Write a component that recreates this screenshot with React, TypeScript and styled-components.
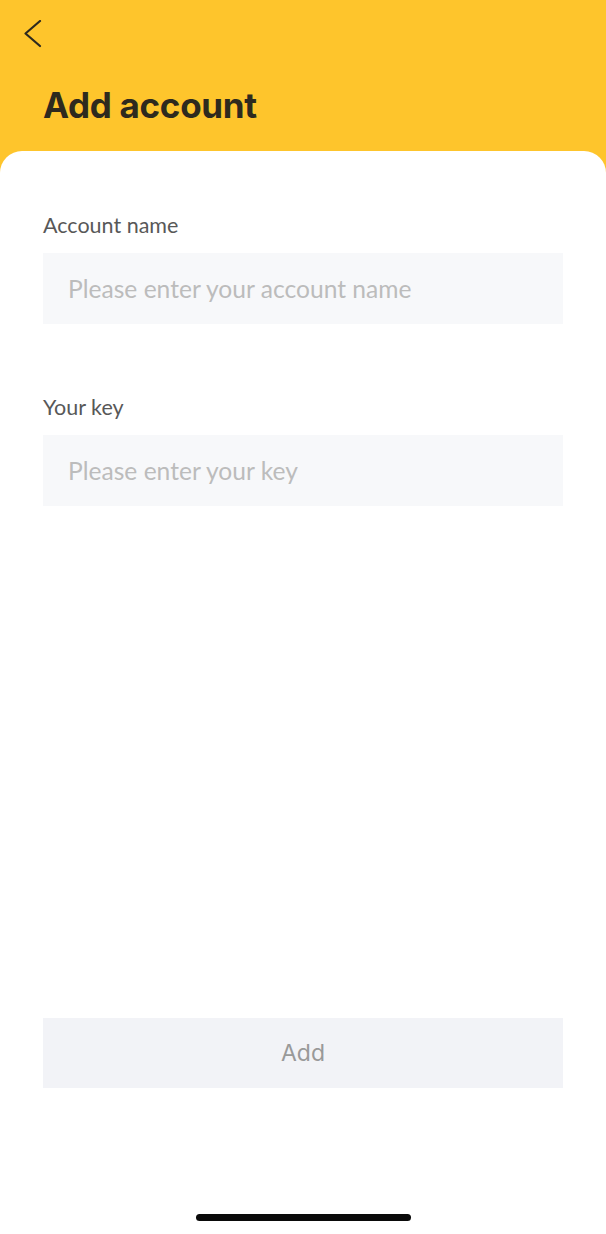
import React from 'react';
import styled, { createGlobalStyle } from 'styled-components';

const GlobalStyle = createGlobalStyle`
  html, body {
    margin : 0;
    padding: 0;
  }
  body {
    font-family: 'Lato', 'Liberation Sans', sans-serif;
    background : #ffffff;
  }
  * {
    box-sizing: border-box;
  }
`;

const Screen = styled.div`
  width           : 606px;
  height          : 1234px;
  display         : flex;
  flex-direction  : column;
  background-color: #fec52c;
`;

const TopBar = styled.header`
  height        : 151px;
  padding       : 20px 0 0 24px;
  display       : flex;
  flex-direction: column;
`;

const BackButton = styled.button`
  width     : 20px;
  height    : 28px;
  padding   : 0;
  border    : none;
  background: transparent;
  cursor    : pointer;
  display   : flex;
`;

const Title = styled.h1`
  margin        : 37px 0 0 19px;
  font-family   : 'Inter', 'Liberation Sans', sans-serif;
  font-size     : 35px;
  font-weight   : 700;
  line-height   : 40px;
  color         : #2e2a1e;
  letter-spacing: -0.3px;
`;

const Sheet = styled.main`
  flex            : 1;
  display         : flex;
  flex-direction  : column;
  background-color: #ffffff;
  border-radius   : 22px 22px 0 0;
  padding         : 61px 43px 0;
`;

const Field = styled.div`
  display       : flex;
  flex-direction: column;
  margin-bottom : 70px;
`;

const Label = styled.label`
  font-size  : 21.5px;
  font-weight: 400;
  line-height: 26px;
  color      : #585858;
  margin     : 0 0 15px;
`;

const Input = styled.input`
  height          : 71px;
  width           : 100%;
  border          : none;
  outline         : none;
  background-color: #f7f8fa;
  padding         : 0 25px;
  font-family     : 'Lato', 'Liberation Sans', sans-serif;
  font-size       : 24.6px;
  color           : #333333;
  &::placeholder {
    color: #bcbcbc;
  }
`;

const SubmitButton = styled.button`
  margin-top      : auto;
  height          : 70px;
  width           : 100%;
  border          : none;
  background-color: #f2f3f7;
  font-family     : 'Inter', 'Liberation Sans', sans-serif;
  font-size       : 23px;
  color           : #999999;
  cursor          : pointer;
`;

const HomeBar = styled.div`
  display        : flex;
  justify-content: center;
  padding        : 126px 0 13px;
`;

const HomeIndicator = styled.span`
  width           : 215px;
  height          : 7px;
  border-radius   : 4px;
  background-color: #0a0a0a;
`;

const ChevronLeft = () => (
  <svg width="20" height="28" viewBox="0 0 20 28" fill="none">
    <polyline
      points="16,1 1.5,13.5 16,26"
      stroke="#2e2a1e"
      strokeWidth="2.2"
      strokeLinecap="round"
      strokeLinejoin="round"
    />
  </svg>
);

const App = () => {
  return (
    <Screen>
      <GlobalStyle />
      <TopBar>
        <BackButton aria-label="back">
          <ChevronLeft />
        </BackButton>
        <Title>Add account</Title>
      </TopBar>
      <Sheet>
        <Field>
          <Label>Account name</Label>
          <Input placeholder="Please enter your account name" />
        </Field>
        <Field>
          <Label>Your key</Label>
          <Input placeholder="Please enter your key" />
        </Field>
        <SubmitButton>Add</SubmitButton>
        <HomeBar>
          <HomeIndicator />
        </HomeBar>
      </Sheet>
    </Screen>
  );
};

export default App;
